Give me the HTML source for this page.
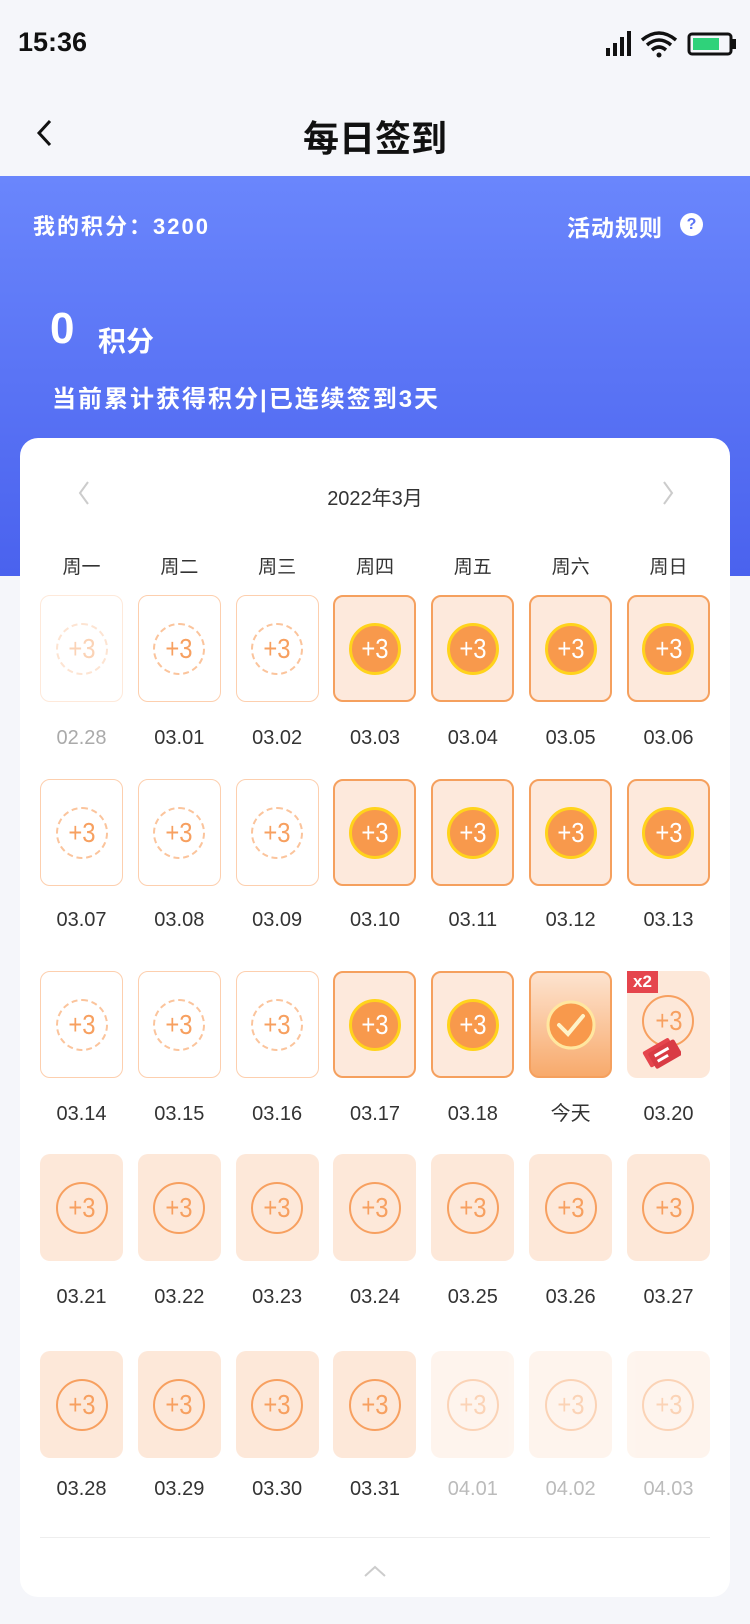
<!DOCTYPE html>
<html><head><meta charset="utf-8"><style>
*{margin:0;padding:0;box-sizing:border-box}
body{width:750px;height:1624px;background:#f5f6fa;font-family:"Liberation Sans","Noto Sans CJK SC",sans-serif;position:relative;overflow:hidden}
.abs{position:absolute}
.hdr{left:0;top:176px;width:750px;height:400px;background:linear-gradient(#6a86fc,#4a62ee)}
.card{left:20px;top:438px;width:710px;height:1159px;background:#fff;border-radius:18px}
.row{position:absolute;left:40px;width:670px;display:flex;justify-content:space-between}
.t{width:83px;height:107px;border-radius:10px;position:relative;display:flex;align-items:center;justify-content:center}
.c{width:52px;height:52px;border-radius:50%;display:flex;align-items:center;justify-content:center;font-size:28px;color:#f7a060}
.c b{font-weight:normal;display:inline-block;transform:scaleX(.85)}
.e{background:#fff;border:1.5px solid #fdcfae}
.e .c{border:2px dashed #fbc49c}
.s{background:#fde9dc;border:2px solid #f5a05e}
.s .c{background:#f8994c;border:3px solid #ffd31c;color:#fff}
.f{background:#fde8d9}
.f .c{border:2px solid #f7a060}
.fd{opacity:.45}
.lab{position:absolute;left:40px;width:670px;display:flex;justify-content:space-between;font-size:20px;color:#333;line-height:26px}
.lab span{width:83px;text-align:center}
.wk{position:absolute;left:40px;top:552px;width:670px;display:flex;justify-content:space-between;font-size:19px;color:#333}
.wk span{width:83px;text-align:center}
</style></head><body>
<div class="abs" style="left:18px;top:27px;font-size:27px;font-weight:bold;color:#111">15:36</div>
<svg class="abs" style="left:604px;top:28px" width="134" height="32" viewBox="0 0 134 32">
<rect x="2" y="20" width="4" height="8" fill="#111"/><rect x="9" y="15" width="4" height="13" fill="#111"/><rect x="16" y="9" width="4" height="19" fill="#111"/><rect x="23" y="3" width="4" height="25" fill="#111"/>
<path d="M38 12 Q55 -2 72 12" stroke="#111" stroke-width="3.5" fill="none"/><path d="M43 17 Q55 7 67 17" stroke="#111" stroke-width="3.5" fill="none"/><path d="M48 22 Q55 16 62 22" stroke="#111" stroke-width="3.5" fill="none"/><circle cx="55" cy="27" r="2.5" fill="#111"/>
<rect x="85" y="6" width="42" height="20" rx="3" fill="none" stroke="#111" stroke-width="3"/><rect x="89" y="10" width="26" height="12" fill="#2fd27a"/><rect x="128" y="11" width="4" height="10" fill="#111"/>
</svg>
<svg class="abs" style="left:34px;top:118px" width="20" height="30"><path d="M16 3 L5 15 L16 27" stroke="#111" stroke-width="3" fill="none"/></svg>
<div class="abs" style="left:0;width:750px;top:110px;text-align:center;font-size:36px;font-weight:bold;color:#111">每日签到</div>
<div class="abs hdr"></div>
<div class="abs" style="left:33px;top:209px;font-size:22px;letter-spacing:2px;font-weight:bold;color:#fff">我的积分：3200</div>
<div class="abs" style="left:567px;top:209px;font-size:23px;letter-spacing:1px;font-weight:bold;color:#fff">活动规则</div>
<div class="abs" style="left:680px;top:213px;width:23px;height:23px;border-radius:50%;background:#fff;color:#5a74f5;font-size:16px;font-weight:bold;text-align:center;line-height:23px">?</div>
<div class="abs" style="left:50px;top:304px;font-size:44px;font-weight:bold;color:#fff">0</div>
<div class="abs" style="left:98px;top:320px;font-size:28px;font-weight:bold;color:#fff">积分</div>
<div class="abs" style="left:52px;top:379px;font-size:24px;letter-spacing:2px;font-weight:bold;color:#fff">当前累计获得积分|已连续签到3天</div>
<div class="abs card"></div>
<svg class="abs" style="left:76px;top:480px" width="16" height="26"><path d="M12 2 L4 13 L12 24" stroke="#ccc" stroke-width="2" fill="none"/></svg>
<svg class="abs" style="left:660px;top:480px" width="16" height="26"><path d="M4 2 L12 13 L4 24" stroke="#ccc" stroke-width="2" fill="none"/></svg>
<div class="abs" style="left:0;width:750px;top:482px;text-align:center;font-size:20px;color:#333">2022年3月</div>
<div class="wk"><span>周一</span><span>周二</span><span>周三</span><span>周四</span><span>周五</span><span>周六</span><span>周日</span></div>

<div class="row" style="top:595px">
<div class="t e fd"><div class="c"><b>+3</b></div></div><div class="t e"><div class="c"><b>+3</b></div></div><div class="t e"><div class="c"><b>+3</b></div></div><div class="t s"><div class="c"><b>+3</b></div></div><div class="t s"><div class="c"><b>+3</b></div></div><div class="t s"><div class="c"><b>+3</b></div></div><div class="t s"><div class="c"><b>+3</b></div></div></div>
<div class="lab" style="top:725px"><span style="color:#aaa">02.28</span><span>03.01</span><span>03.02</span><span>03.03</span><span>03.04</span><span>03.05</span><span>03.06</span></div>

<div class="row" style="top:779px">
<div class="t e"><div class="c"><b>+3</b></div></div><div class="t e"><div class="c"><b>+3</b></div></div><div class="t e"><div class="c"><b>+3</b></div></div><div class="t s"><div class="c"><b>+3</b></div></div><div class="t s"><div class="c"><b>+3</b></div></div><div class="t s"><div class="c"><b>+3</b></div></div><div class="t s"><div class="c"><b>+3</b></div></div></div>
<div class="lab" style="top:907px"><span>03.07</span><span>03.08</span><span>03.09</span><span>03.10</span><span>03.11</span><span>03.12</span><span>03.13</span></div>

<div class="row" style="top:971px">
<div class="t e"><div class="c"><b>+3</b></div></div><div class="t e"><div class="c"><b>+3</b></div></div><div class="t e"><div class="c"><b>+3</b></div></div><div class="t s"><div class="c"><b>+3</b></div></div><div class="t s"><div class="c"><b>+3</b></div></div>
<div class="t" style="background:linear-gradient(#fde3cf,#f8aa6c);border:2px solid #f5a05e"><svg width="52" height="52"><circle cx="26" cy="26" r="23" fill="#f8994c" stroke="#ffe7a0" stroke-width="3"/><path d="M14 26 L23 35 L38 17" stroke="#fff3c8" stroke-width="4" fill="none" stroke-linecap="round"/></svg></div>
<div class="t f"><div class="abs" style="left:0;top:0;width:31px;height:22px;background:#e5454d;color:#fff;font-size:17px;font-weight:bold;text-align:center;line-height:22px">x2</div><div class="c" style="margin-top:-8px"><b>+3</b></div>
<svg class="abs" style="left:14px;top:64px" width="40" height="36"><g transform="rotate(-30 20 18)"><rect x="4" y="8" width="30" height="18" rx="2" fill="#e5454d"/><rect x="8" y="12" width="30" height="18" rx="2" fill="#d93b44"/><rect x="13" y="16" width="16" height="3" fill="#fff"/><rect x="13" y="22" width="12" height="3" fill="#fff"/></g></svg></div></div>
<div class="lab" style="top:1101px"><span>03.14</span><span>03.15</span><span>03.16</span><span>03.17</span><span>03.18</span><span>今天</span><span>03.20</span></div>

<div class="row" style="top:1154px">
<div class="t f"><div class="c"><b>+3</b></div></div><div class="t f"><div class="c"><b>+3</b></div></div><div class="t f"><div class="c"><b>+3</b></div></div><div class="t f"><div class="c"><b>+3</b></div></div><div class="t f"><div class="c"><b>+3</b></div></div><div class="t f"><div class="c"><b>+3</b></div></div><div class="t f"><div class="c"><b>+3</b></div></div></div>
<div class="lab" style="top:1284px"><span>03.21</span><span>03.22</span><span>03.23</span><span>03.24</span><span>03.25</span><span>03.26</span><span>03.27</span></div>

<div class="row" style="top:1351px">
<div class="t f"><div class="c"><b>+3</b></div></div><div class="t f"><div class="c"><b>+3</b></div></div><div class="t f"><div class="c"><b>+3</b></div></div><div class="t f"><div class="c"><b>+3</b></div></div><div class="t f fd"><div class="c"><b>+3</b></div></div><div class="t f fd"><div class="c"><b>+3</b></div></div><div class="t f fd"><div class="c"><b>+3</b></div></div></div>
<div class="lab" style="top:1476px"><span>03.28</span><span>03.29</span><span>03.30</span><span>03.31</span><span style="color:#bbb">04.01</span><span style="color:#bbb">04.02</span><span style="color:#bbb">04.03</span></div>

<div class="abs" style="left:40px;top:1537px;width:670px;height:1px;background:#eee"></div>
<svg class="abs" style="left:363px;top:1564px" width="24" height="14"><path d="M2 12 L12 3 L22 12" stroke="#ccc" stroke-width="2" fill="none"/></svg>
</body></html>
